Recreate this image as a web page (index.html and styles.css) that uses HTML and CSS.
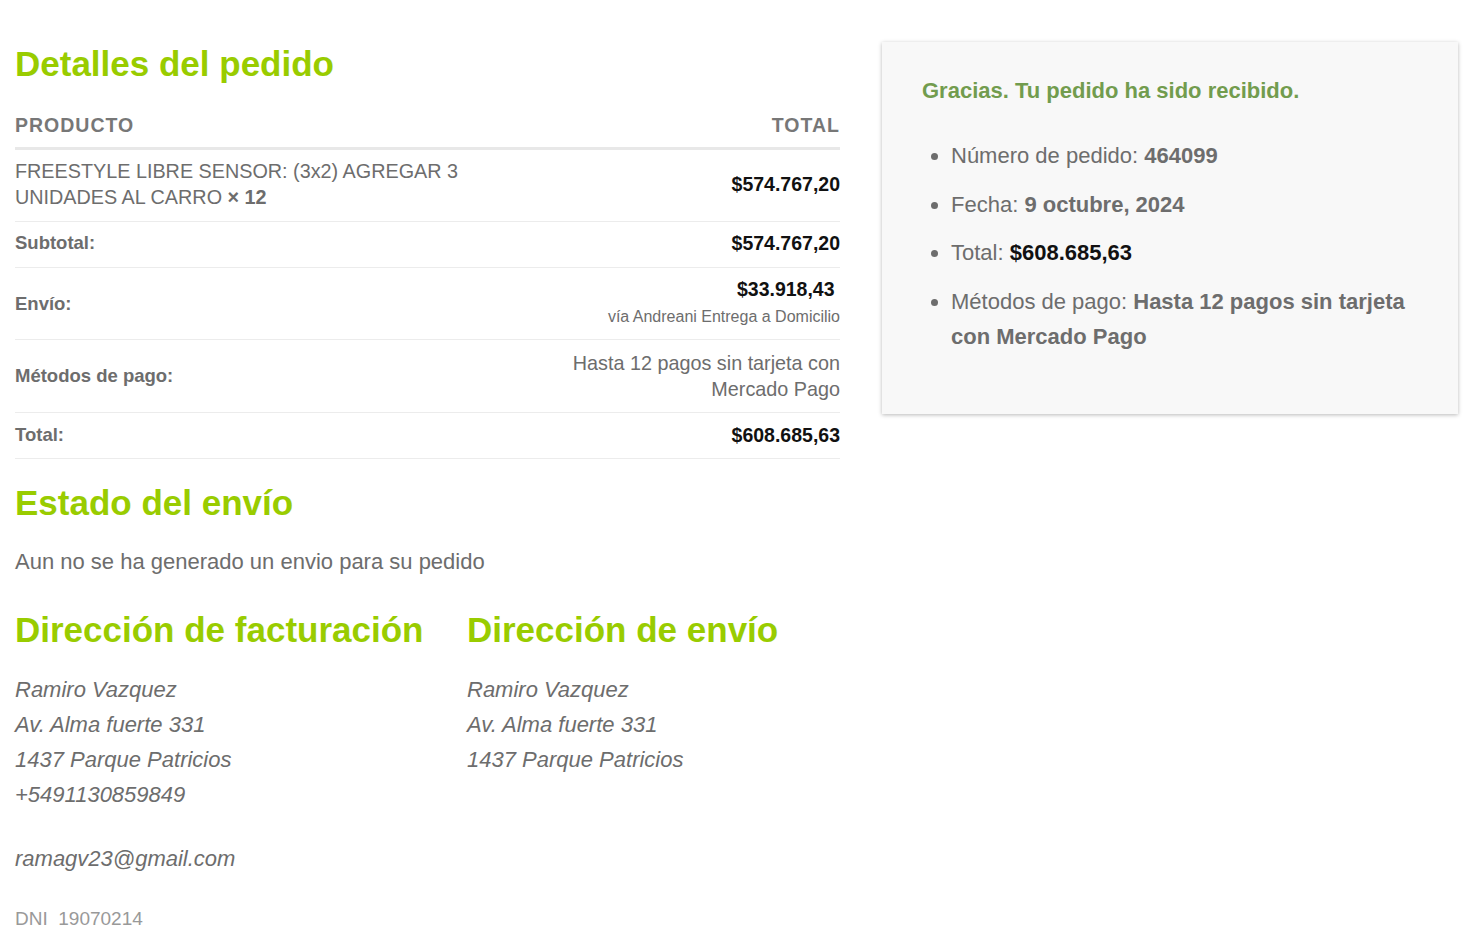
FILE: index.html
```html
<!DOCTYPE html>
<html lang="es">
<head>
<meta charset="utf-8">
<title>Pedido recibido</title>
<link rel="stylesheet" href="styles.css">
</head>
<body>
<div class="page">
  <main class="main">
    <h2 class="title">Detalles del pedido</h2>
    <table class="order">
      <thead>
        <tr><th class="left">Producto</th><th class="right">Total</th></tr>
      </thead>
      <tbody>
        <tr class="item">
          <td class="left prod">FREESTYLE LIBRE SENSOR: (3x2) AGREGAR 3<br>UNIDADES AL CARRO <strong class="qty">× 12</strong></td>
          <td class="right"><span class="amount">$574.767,20</span></td>
        </tr>
      </tbody>
      <tfoot>
        <tr class="sub"><th class="left label">Subtotal:</th><td class="right"><span class="amount">$574.767,20</span></td></tr>
        <tr class="ship"><th class="left label">Envío:</th><td class="right"><span class="amount">$33.918,43</span>&nbsp;<small class="via">vía Andreani Entrega a Domicilio</small></td></tr>
        <tr class="method"><th class="left label">Métodos de pago:</th><td class="right pay">Hasta 12 pagos sin tarjeta con<br>Mercado Pago</td></tr>
        <tr class="grand"><th class="left label">Total:</th><td class="right"><span class="amount">$608.685,63</span></td></tr>
      </tfoot>
    </table>

    <h2 class="title second">Estado del envío</h2>
    <p class="status">Aun no se ha generado un envio para su pedido</p>

    <div class="addresses">
      <section class="addr">
        <h2 class="title">Dirección de facturación</h2>
        <address>Ramiro Vazquez<br>Av. Alma fuerte 331<br>1437 Parque Patricios<br>+5491130859849</address>
        <address class="email">ramagv23@gmail.com</address>
        <p class="dni">DNI&nbsp;&nbsp;19070214</p>
      </section>
      <section class="addr">
        <h2 class="title">Dirección de envío</h2>
        <address>Ramiro Vazquez<br>Av. Alma fuerte 331<br>1437 Parque Patricios</address>
      </section>
    </div>
  </main>

  <aside class="thanks">
    <p class="notice">Gracias. Tu pedido ha sido recibido.</p>
    <ul class="overview">
      <li>Número de pedido: <strong>464099</strong></li>
      <li>Fecha: <strong>9 octubre, 2024</strong></li>
      <li>Total: <strong class="black">$608.685,63</strong></li>
      <li>Métodos de pago: <strong>Hasta 12 pagos sin tarjeta con Mercado Pago</strong></li>
    </ul>
  </aside>
</div>
</body>
</html>
```

FILE: styles.css
```css
* { box-sizing: border-box; }

html, body {
  margin: 0;
  padding: 0;
  background: #ffffff;
}

body {
  font-family: "Liberation Sans", Arial, sans-serif;
  color: #6d6d6d;
}

.page {
  display: flex;
  align-items: flex-start;
  padding: 42px 18px 0 15px;
  gap: 42px;
}

.main {
  width: 825px;
  flex: none;
}

.title {
  margin: 0;
  font-size: 35px;
  line-height: 40px;
  font-weight: 700;
  color: #99cc00;
  margin-top: 2px;
  white-space: nowrap;
}

.order {
  width: 100%;
  border-collapse: collapse;
  margin-top: 20px;
}

.order thead th {
  font-size: 19.5px;
  line-height: 24px;
  font-weight: 700;
  text-transform: uppercase;
  letter-spacing: 1px;
  color: #777777;
  padding: 9px 0 10px;
  border-bottom: 3px solid #e8e8e8;
}

.order td, .order tfoot th {
  padding: 10px 0 9px;
  border-bottom: 1px solid #ececec;
  vertical-align: middle;
}

.order .item td {
  padding-top: 8px;
  padding-bottom: 11px;
}

.order .sub td,
.order .sub th {
  padding-top: 8px;
  padding-bottom: 11px;
}

.order .grand td,
.order .grand th {
  padding-top: 9px;
  padding-bottom: 10px;
}

.left { text-align: left; }
.right { text-align: right; }

.prod {
  font-size: 19.8px;
  line-height: 26px;
  color: #6d6d6d;
}

.qty {
  font-weight: 700;
}

.label {
  font-size: 18.5px;
  line-height: 26px;
  font-weight: 700;
  color: #6d6d6d;
}

.amount {
  font-size: 19.5px;
  line-height: 26px;
  font-weight: 700;
  color: #111111;
}

.order .ship td {
  padding-top: 8px;
  padding-bottom: 9px;
  font-size: 19.5px;
  line-height: 26px;
}

.via {
  display: block;
  margin-top: 2px;
  font-size: 16px;
  line-height: 26px;
  color: #6d6d6d;
}

.order .method td,
.order .method th {
  padding-top: 10px;
  padding-bottom: 10px;
}

.pay {
  font-size: 19.8px;
  line-height: 26px;
  color: #6d6d6d;
}

.second {
  margin-top: 24px;
}

.status {
  margin: 24px 0 0;
  font-size: 22px;
  line-height: 30px;
  color: #6d6d6d;
}

.addresses {
  display: grid;
  grid-template-columns: 452px 1fr;
  margin-top: 33px;
}

.addresses .title {
  margin-top: 0;
}

address {
  margin-top: 22px;
  font-style: italic;
  font-size: 22px;
  line-height: 35px;
  color: #6d6d6d;
}

address.email {
  margin-top: 29px;
}

.dni {
  margin: 31px 0 0;
  font-size: 19px;
  line-height: 24px;
  color: #999999;
}

.thanks {
  width: 576px;
  flex: none;
  background: #f8f8f8;
  box-shadow: 0 1px 4px rgba(0, 0, 0, 0.28);
  padding: 36px 40px 60px;
}

.notice {
  margin: 0;
  font-size: 22px;
  line-height: 26px;
  font-weight: 700;
  color: #729c4e;
}

.overview {
  margin: 34px 0 0;
  padding-left: 29px;
  list-style: disc;
  font-size: 22px;
  line-height: 35px;
  color: #6d6d6d;
}

.overview li {
  margin-bottom: 13.5px;
}

.overview li:last-child {
  margin-bottom: 0;
}

.overview strong {
  font-weight: 700;
}

.overview strong.black {
  color: #111111;
}
```
